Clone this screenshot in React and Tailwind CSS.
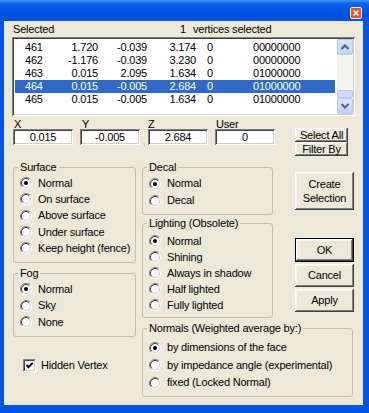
import React from "react";

const SUNKEN =
  "shadow-[inset_1px_1px_0_#808080,inset_-1px_-1px_0_#ffffff,inset_2px_2px_0_#404040,inset_-2px_-2px_0_#D4D0C8]";
const RAISED =
  "shadow-[inset_-1px_-1px_0_#404040,inset_1px_1px_0_#ffffff,inset_-2px_-2px_0_#808080,inset_2px_2px_0_#F5F4EC]";

const rows = [
  ["461", "1.720", "-0.039", "3.174", "0", "00000000"],
  ["462", "-1.176", "-0.039", "3.230", "0", "00000000"],
  ["463", "0.015", "2.095", "1.634", "0", "01000000"],
  ["464", "0.015", "-0.005", "2.684", "0", "01000000"],
  ["465", "0.015", "-0.005", "1.634", "0", "01000000"],
];

function Radio({ checked }) {
  return (
    <svg width="12" height="12" viewBox="0 0 12 12" className="shrink-0">
      <circle cx="6" cy="6" r="5" fill="#ffffff" />
      <path d="M2.11 9.89 A5.5 5.5 0 0 1 9.89 2.11" fill="none" stroke="#808080" />
      <path d="M9.89 2.11 A5.5 5.5 0 0 1 2.11 9.89" fill="none" stroke="#ffffff" />
      <path d="M2.82 9.18 A4.5 4.5 0 0 1 9.18 2.82" fill="none" stroke="#404040" />
      <path d="M9.18 2.82 A4.5 4.5 0 0 1 2.82 9.18" fill="none" stroke="#D4D0C8" />
      {checked && <circle cx="6" cy="6" r="2" fill="#000000" />}
    </svg>
  );
}

function RadioRow({ label, checked, h }) {
  return (
    <div className={`flex items-center gap-[6px] ${h}`}>
      <Radio checked={checked} />
      <span className="leading-[13px] whitespace-nowrap">{label}</span>
    </div>
  );
}

function Group({ label, className, children }) {
  return (
    <div className={`relative border border-[#C2BFB0] rounded-[3px] ${className}`}>
      <span className="absolute left-[4px] -top-[7px] px-[2px] bg-[#ECE9D8] leading-[13px] whitespace-nowrap">
        {label}
      </span>
      {children}
    </div>
  );
}

function Btn({ children, className }) {
  return (
    <div
      className={`flex items-center justify-center text-center leading-[13px] bg-[#ECE9D8] ${RAISED} ${className}`}
    >
      {children}
    </div>
  );
}

function Field({ label, value, labelPad }) {
  return (
    <div className="flex flex-col w-[60px] shrink-0">
      <div className={`h-[10px] leading-[11px] whitespace-nowrap ${labelPad}`}>{label}</div>
      <div className={`h-[16px] bg-white pt-[2px] text-center leading-[13px] ${SUNKEN}`}>{value}</div>
    </div>
  );
}

function ScrollBtn({ up }) {
  return (
    <div className="w-[16px] h-[16px] rounded-[2px] border border-[#B7C8F2] bg-[linear-gradient(to_bottom,#DCE6FE,#BFD0F9)] flex items-center justify-center">
      <svg width="10" height="8" viewBox="0 0 10 8">
        <path
          d={up ? "M1.5 6 L5 2.5 L8.5 6" : "M1.5 2 L5 5.5 L8.5 2"}
          fill="none"
          stroke="#4D6185"
          strokeWidth="2"
        />
      </svg>
    </div>
  );
}

export default function App() {
  return (
    <div className="w-[369px] h-[413px] flex flex-col bg-[#0055E5] font-['Liberation_Sans',Arial,sans-serif] text-[11px] tracking-[-0.2px] text-black overflow-hidden">
      {/* title bar */}
      <div className="h-[21px] shrink-0 flex justify-end pr-[7px] pt-[7px] bg-[linear-gradient(to_bottom,#4A93F7_0px,#1468EE_3px,#0058E8_8px,#0055E5_60%,#0050DE_100%)]">
        <svg width="12" height="12" viewBox="0 0 12 12">
          <rect x="0.5" y="0.5" width="11" height="11" rx="1.5" fill="#E0542A" stroke="#F4F0F0" />
          <path d="M3.5 3.5 L8.5 8.5 M8.5 3.5 L3.5 8.5" stroke="#ffffff" strokeWidth="1.6" />
        </svg>
      </div>

      {/* client area */}
      <div className="flex-1 ml-[4px] mr-[6px] mb-[8px] bg-[#ECE9D8] flex flex-col">
        {/* header */}
        <div className="flex h-[16px] pt-[2px] pl-[9px] leading-[13px] shrink-0">
          <span className="w-[167px] shrink-0">Selected</span>
          <span>1</span>
          <span className="ml-[7px]">vertices selected</span>
        </div>

        {/* list */}
        <div className={`ml-[8px] w-[343px] h-[79px] shrink-0 bg-white p-[2px] flex ${SUNKEN}`}>
          <div className="ml-[1px] pt-[2px] w-[320px] flex flex-col">
            {rows.map((r, i) => (
              <div
                key={i}
                className={`flex h-[13px] leading-[13px] w-[320px] ${
                  i === 3 ? "bg-[#316AC5] text-white" : ""
                }`}
              >
                <span className="w-[40px] pl-[10px] shrink-0">{r[0]}</span>
                <span className="w-[43px] text-right shrink-0">{r[1]}</span>
                <span className="w-[49px] text-right shrink-0">{r[2]}</span>
                <span className="w-[49px] text-right shrink-0">{r[3]}</span>
                <span className="w-[57px] pl-[11px] shrink-0">{r[4]}</span>
                <span className="shrink-0">{r[5]}</span>
              </div>
            ))}
          </div>
          <div className="ml-auto w-[16px] flex flex-col bg-[#F4F3EE]">
            <ScrollBtn up />
            <div className="flex-1" />
            <div className="w-[16px] h-[8px] rounded-[2px] border border-[#B7C8F2] bg-[#CCDAFB]" />
            <ScrollBtn />
          </div>
        </div>

        {/* coordinates row */}
        <div className="flex items-start mt-[3px] ml-[9px] shrink-0">
          <Field label="X" value="0.015" labelPad="pl-[1px]" />
          <div className="ml-[7px]">
            <Field label="Y" value="-0.005" labelPad="pl-[2px]" />
          </div>
          <div className="ml-[8px]">
            <Field label="Z" value="2.684" labelPad="pl-0" />
          </div>
          <div className="ml-[7px]">
            <Field label="User" value="0" labelPad="pl-[1px]" />
          </div>
          <div className="ml-[20px] mt-[9px] flex flex-col">
            <Btn className="w-[53px] h-[14px]">Select All</Btn>
            <Btn className="w-[53px] h-[14px]">Filter By</Btn>
          </div>
        </div>

        {/* lower area */}
        <div className="flex ml-[9px]">
          {/* left column */}
          <div className="w-[123px] flex flex-col shrink-0">
            <Group label="Surface" className="mt-[11px] h-[96px] pt-[7px] pl-[6px]">
              <RadioRow label="Normal" checked h="h-[16.3px]" />
              <RadioRow label="On surface" h="h-[16.3px]" />
              <RadioRow label="Above surface" h="h-[16.3px]" />
              <RadioRow label="Under surface" h="h-[16.3px]" />
              <RadioRow label="Keep height (fence)" h="h-[16.3px]" />
            </Group>
            <Group label="Fog" className="mt-[10px] h-[64px] pt-[7px] pl-[6px]">
              <RadioRow label="Normal" checked h="h-[16.5px]" />
              <RadioRow label="Sky" h="h-[16.5px]" />
              <RadioRow label="None" h="h-[16.5px]" />
            </Group>
            <div className="mt-[20px] h-[16px] pl-[10px] flex items-center gap-[5px]">
              <svg width="13" height="13" viewBox="0 0 13 13" className="shrink-0">
                <rect x="0" y="0" width="13" height="13" fill="#ffffff" />
                <path d="M0.5 12.5 V0.5 H12.5" fill="none" stroke="#808080" />
                <path d="M1.5 11.5 V1.5 H11.5" fill="none" stroke="#404040" />
                <path d="M1 12.5 H12.5 V1" fill="none" stroke="#ffffff" />
                <path d="M2 11.5 H11.5 V2" fill="none" stroke="#D4D0C8" />
                <path d="M3.5 6 L5.5 8.2 L9.7 3.8" fill="none" stroke="#000000" strokeWidth="1.9" />
              </svg>
              <span className="leading-[13px]">Hidden Vertex</span>
            </div>
          </div>

          {/* right area */}
          <div className="ml-[6px] w-[213px] flex flex-col">
            <div className="flex">
              <div className="w-[131px] flex flex-col shrink-0">
                <Group label="Decal" className="mt-[11px] h-[48px] pt-[7px] pl-[6px]">
                  <RadioRow label="Normal" checked h="h-[17px]" />
                  <RadioRow label="Decal" h="h-[17px]" />
                </Group>
                <Group label="Lighting (Obsolete)" className="mt-[8px] h-[95px] pt-[9px] pl-[6px]">
                  <RadioRow label="Normal" checked h="h-[16px]" />
                  <RadioRow label="Shining" h="h-[16px]" />
                  <RadioRow label="Always in shadow" h="h-[16px]" />
                  <RadioRow label="Half lighted" h="h-[16px]" />
                  <RadioRow label="Fully lighted" h="h-[16px]" />
                </Group>
              </div>
              <div className="ml-[22px] w-[59px] flex flex-col shrink-0">
                <Btn className="mt-[16px] h-[38px] leading-[14px]">
                  Create
                  <br />
                  Selection
                </Btn>
                <div className="mt-[28px] h-[24px] border border-black">
                  <Btn className="h-full">OK</Btn>
                </div>
                <Btn className="mt-[2px] h-[23px]">Cancel</Btn>
                <Btn className="mt-[2px] h-[23px]">Apply</Btn>
              </div>
            </div>
            <Group
              label="Normals (Weighted average by:)"
              className="mt-[10px] w-[211px] h-[69px] pt-[10px] pl-[6px]"
            >
              <RadioRow label="by dimensions of the face" checked h="h-[17.5px]" />
              <RadioRow label="by impedance angle (experimental)" h="h-[17.5px]" />
              <RadioRow label="fixed (Locked Normal)" h="h-[17.5px]" />
            </Group>
          </div>
        </div>
      </div>
    </div>
  );
}
